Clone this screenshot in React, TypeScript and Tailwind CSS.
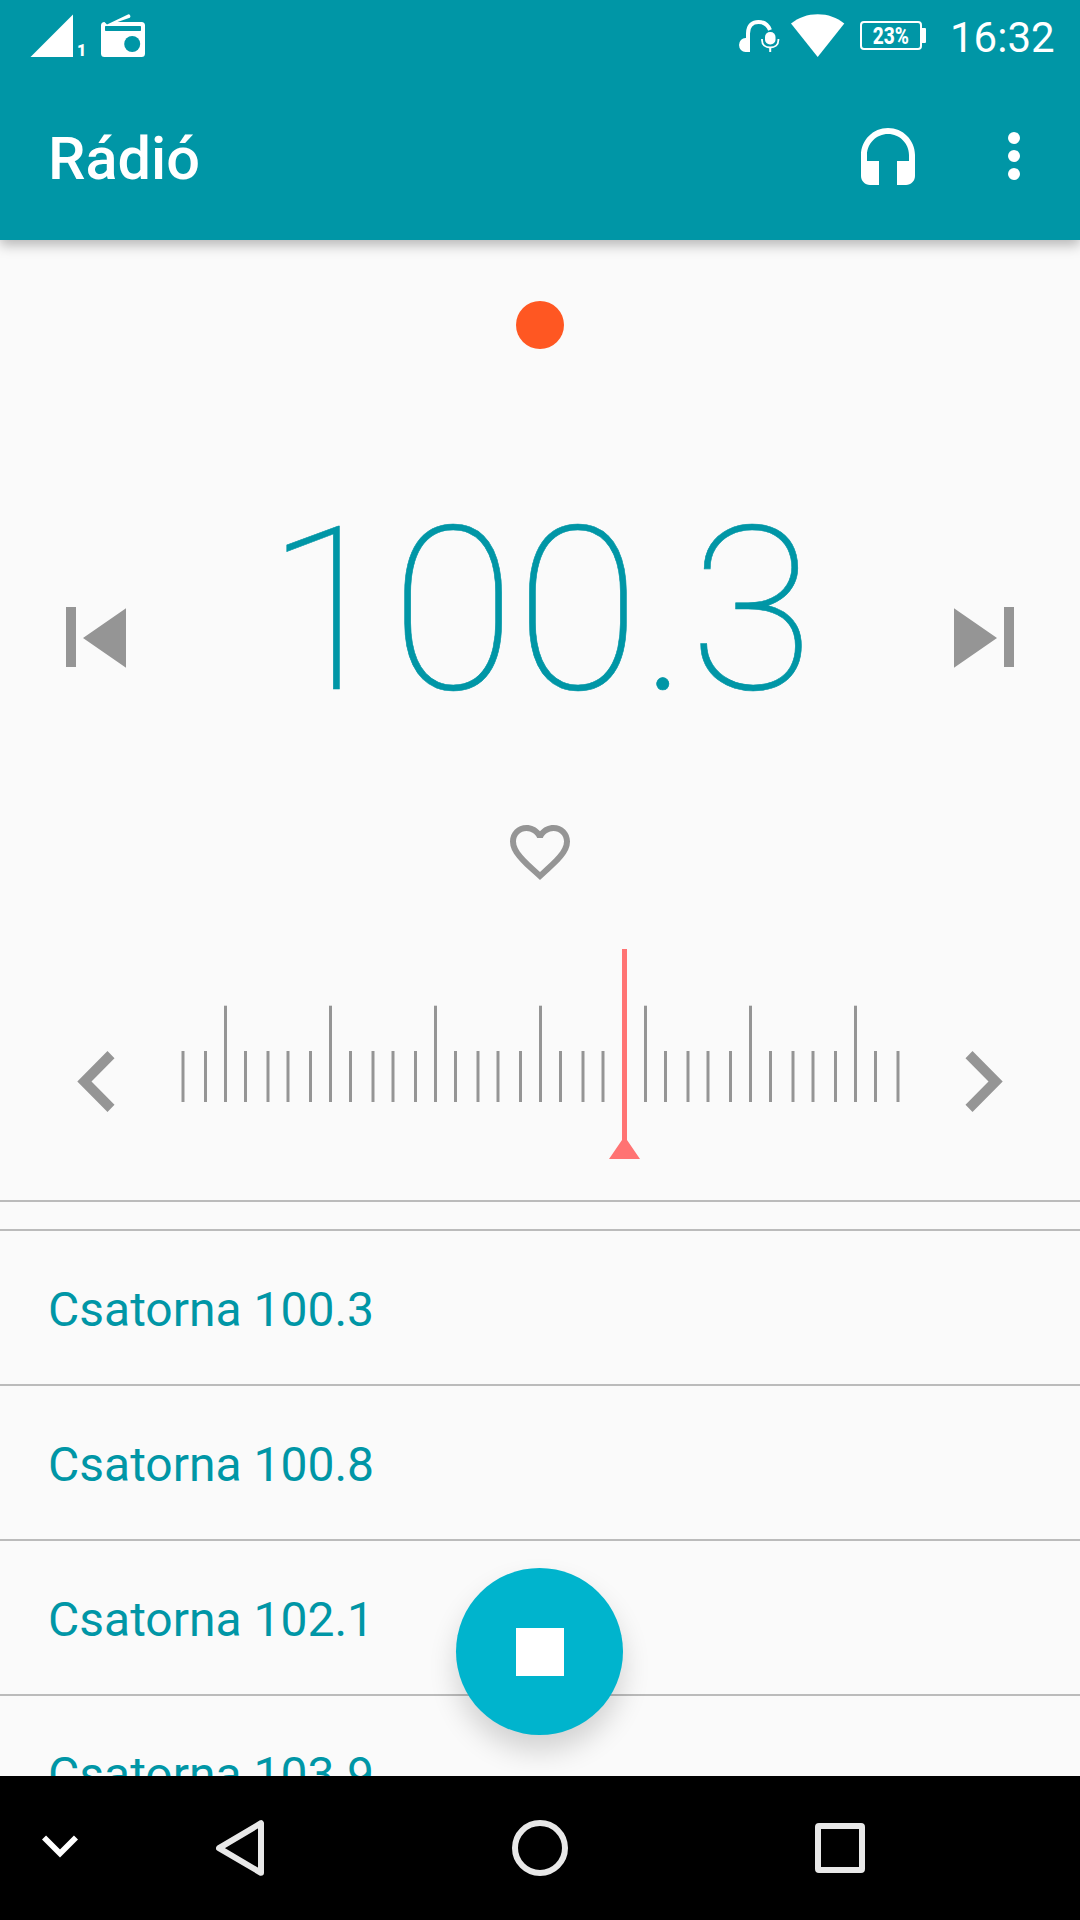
import { useState } from "react";

const stations = ["100.3", "100.8", "102.1", "103.9"];

// every fifth tick (starting from the third) is a long one
const offsets = [0, 20, 42.5, 62.5, 85];
const ticks = Array.from({ length: 35 }, (_, i) => {
  const step = i + 3;
  return {
    x: 224 - 105 + Math.floor(step / 5) * 105 + offsets[step % 5] - 181,
    major: step % 5 === 0,
  };
});

function StatusBar() {
  return (
    <div className="flex h-[72px] shrink-0 items-start justify-between pl-[30px] pr-[25px] text-white">
      <div className="flex items-start">
        <svg className="mt-3.5 h-11 w-[44px]" viewBox="0 0 44 44" fill="currentColor">
          <path d="M.5 43H43V.5z" />
        </svg>
        <span className="mt-[42px] w-[11px] pl-[3px] text-[16px] leading-[17px] font-black">1</span>
        <svg className="ml-4 mt-3.5 h-11 w-[44px]" viewBox="0 0 44 44" fill="currentColor">
          <path d="M6 10.5 27 .4a2 2 0 0 1 1.8 3.4L16.5 8H40.5a3.5 3.5 0 0 1 3.5 3.5V39.5a3.5 3.5 0 0 1-3.5 3.5H3.5A3.5 3.5 0 0 1 0 39.5V11.5A3.5 3.5 0 0 1 3.5 8z" />
          <rect x="4" y="12" width="36" height="5" rx=".8" fill="#0096a6" />
          <circle cx="31.2" cy="30" r="8" fill="#0096a6" />
        </svg>
      </div>
      <div className="flex items-start">
        <svg className="mt-[19px] h-[34px] w-[42px]" viewBox="0 0 42 34" fill="none" stroke="currentColor">
          <path d="M9 22V14.5C9 6 14 3 19.5 3c5.5 0 9.5 3 11.5 8" strokeWidth="4" />
          <path d="M11 18.5V33H6.5A6 6.5 0 0 1 6.5 19z" fill="currentColor" stroke="none" />
          <rect x="26" y="13" width="10.5" height="12.5" rx="5" fill="currentColor" stroke="none" />
          <path d="M23 20v1c0 5 3.5 7.5 8.2 7.5s8.2-2.5 8.2-7.5v-1" strokeWidth="1.8" />
          <path d="M31.2 28.5V33" strokeWidth="2" />
        </svg>
        <svg className="ml-[10px] mt-3.5 h-11 w-[54px]" viewBox="0 0 54 44" fill="currentColor">
          <path d="M0 9.5C7.5 3.5 16.5.2 26.7.2S46 3.5 53.3 9.5L26.7 43z" />
        </svg>
        <div className="ml-[15px] mt-[21px] flex items-center">
          <div className="flex h-[29px] w-[62px] items-center justify-center rounded-[4px] border-2 border-white text-[23px] font-extrabold">
            <span className="mt-[3px] scale-x-[.83]">23%</span>
          </div>
          <div className="h-[15px] w-1 rounded-r-[1px] bg-white" />
        </div>
        <span className="ml-6 mt-[13px] w-[105px] text-[42px] leading-[50px]">16:32</span>
      </div>
    </div>
  );
}

function Toolbar() {
  return (
    <div className="flex h-[168px] shrink-0 items-center justify-between pl-12 text-white">
      <h1 className="mt-1.5 text-[59.5px] leading-[72px] font-medium">Rádió</h1>
      <div className="flex items-center">
        <svg className="mr-[54px] mt-2.5 size-[72px]" viewBox="0 0 24 24" fill="currentColor">
          <path d="M12 1c-4.97 0-9 4.03-9 9v7c0 1.66 1.34 3 3 3h3v-8H5v-2c0-3.87 3.13-7 7-7s7 3.13 7 7v2h-4v8h3c1.66 0 3-1.34 3-3v-7c0-4.97-4.03-9-9-9z" />
        </svg>
        <svg className="mr-[30px] size-[72px]" viewBox="0 0 24 24" fill="currentColor">
          <circle cx="12" cy="6" r="2" />
          <circle cx="12" cy="12" r="2" />
          <circle cx="12" cy="18" r="2" />
        </svg>
      </div>
    </div>
  );
}

function TunerScale() {
  return (
    <svg className="h-[212px] w-[718px] overflow-visible" viewBox="0 0 718 212">
      {ticks.map((t) => (
        <rect
          key={t.x}
          x={t.x}
          y={t.major ? 56.7 : 102}
          width="3"
          height={t.major ? 96.3 : 51}
          fill="#959595"
        />
      ))}
      <path d="M441 0h5v191l13 19h-31l13-19z" fill="#ff7373" />
    </svg>
  );
}

function NavBar() {
  return (
    <nav className="flex h-36 shrink-0 items-center bg-black">
      <svg className="mb-[5px] ml-[42px] h-6 w-9" viewBox="0 0 36 24" fill="none" stroke="#fff" strokeWidth="5.8">
        <path d="M2 3.5 18 19.5 34 3.5" />
      </svg>
      <svg className="ml-[138px] h-14 w-12" viewBox="0 0 48 56" fill="none" stroke="#e8e8e8" strokeWidth="6" strokeLinejoin="round">
        <path d="M3 28.2 45 3.2V52.8z" />
      </svg>
      <div className="ml-[248px] size-14 rounded-full border-6 border-[#e8e8e8]" />
      <div className="ml-[247px] size-[50px] rounded border-6 border-[#e8e8e8]" />
    </nav>
  );
}

export default function App() {
  const [current] = useState(stations[0]);

  return (
    <div className="flex h-[1920px] w-[1080px] flex-col overflow-hidden bg-[#fafafa] font-['Roboto',sans-serif]">
      <header className="relative z-10 flex shrink-0 flex-col bg-[#0096a6] shadow-[0_5px_12px_rgba(0,0,0,0.28)]">
        <StatusBar />
        <Toolbar />
      </header>

      <main className="relative flex min-h-0 flex-1 flex-col overflow-hidden">
        <section className="flex h-[962px] shrink-0 flex-col items-center border-b-2 border-[#bbbbbb]">
          <div className="mt-[61px] size-12 rounded-full bg-[#ff5722]" />
          <div className="mt-[122px] flex h-[272px] w-full items-center justify-between px-[66px]">
            <svg className="mt-[61px] h-[61px] w-[60px]" viewBox="0 0 60 61" fill="#959595">
              <path d="M0 0h10v60H0zM17 31 60 1.3v59.4z" />
            </svg>
            <div className="mt-2 text-[228px] leading-none font-thin text-[#0096a6] [-webkit-text-stroke:0.6px_#0096a6]">
              {current}
            </div>
            <svg className="mt-[61px] h-[61px] w-[60px]" viewBox="0 0 60 61" fill="#959595">
              <path d="M50 0h10v60H50zM43 31 0 1.3v59.4z" />
            </svg>
          </div>
          <svg className="mt-[73px] size-[72px]" viewBox="0 0 24 24" fill="#959595">
            <path d="M16.5 3c-1.74 0-3.41.81-4.5 2.09C10.91 3.81 9.24 3 7.5 3 4.42 3 2 5.42 2 8.5c0 3.78 3.4 6.86 8.55 11.54L12 21.35l1.45-1.32C18.6 15.36 22 12.28 22 8.5 22 5.42 19.58 3 16.5 3zm-4.4 15.55l-.1.1-.1-.1C7.14 14.24 4 11.39 4 8.5 4 6.5 5.5 5 7.5 5c1.54 0 3.04.99 3.57 2.36h1.87C13.46 5.99 14.96 5 16.5 5c2 0 3.5 1.5 3.5 3.5 0 2.89-3.14 5.74-7.9 10.05z" />
          </svg>
          <div className="mt-[61px] flex w-full items-center justify-between px-[77px]">
            <svg className="mt-[53px] h-[61px] w-[38px]" viewBox="0 0 38 61" fill="#959595">
              <path d="M.3 30.5 30.5 0l7 7.2L14.5 30.5l23 23.3-7 7.2z" />
            </svg>
            <TunerScale />
            <svg className="mt-[53px] h-[61px] w-[38px]" viewBox="0 0 38 61" fill="#959595">
              <path d="M37.7 30.5 7.5 0l-7 7.2 23 23.3-23 23.3 7 7.2z" />
            </svg>
          </div>
        </section>

        <ul className="mt-[27px] border-t-2 border-[#bbbbbb]">
          {stations.map((s) => (
            <li
              key={s}
              className="flex h-[155px] items-center border-b-2 border-[#bbbbbb] pt-1 pl-12 text-[48px] text-[#0096a6]"
            >
              Csatorna {s}
            </li>
          ))}
        </ul>

        <button className="absolute top-[1328px] left-[456px] flex size-[167px] items-center justify-center rounded-full bg-[#00b4cd] shadow-[0_16px_28px_rgba(0,0,0,0.16)]">
          <span className="size-12 bg-white" />
        </button>
      </main>

      <NavBar />
    </div>
  );
}
